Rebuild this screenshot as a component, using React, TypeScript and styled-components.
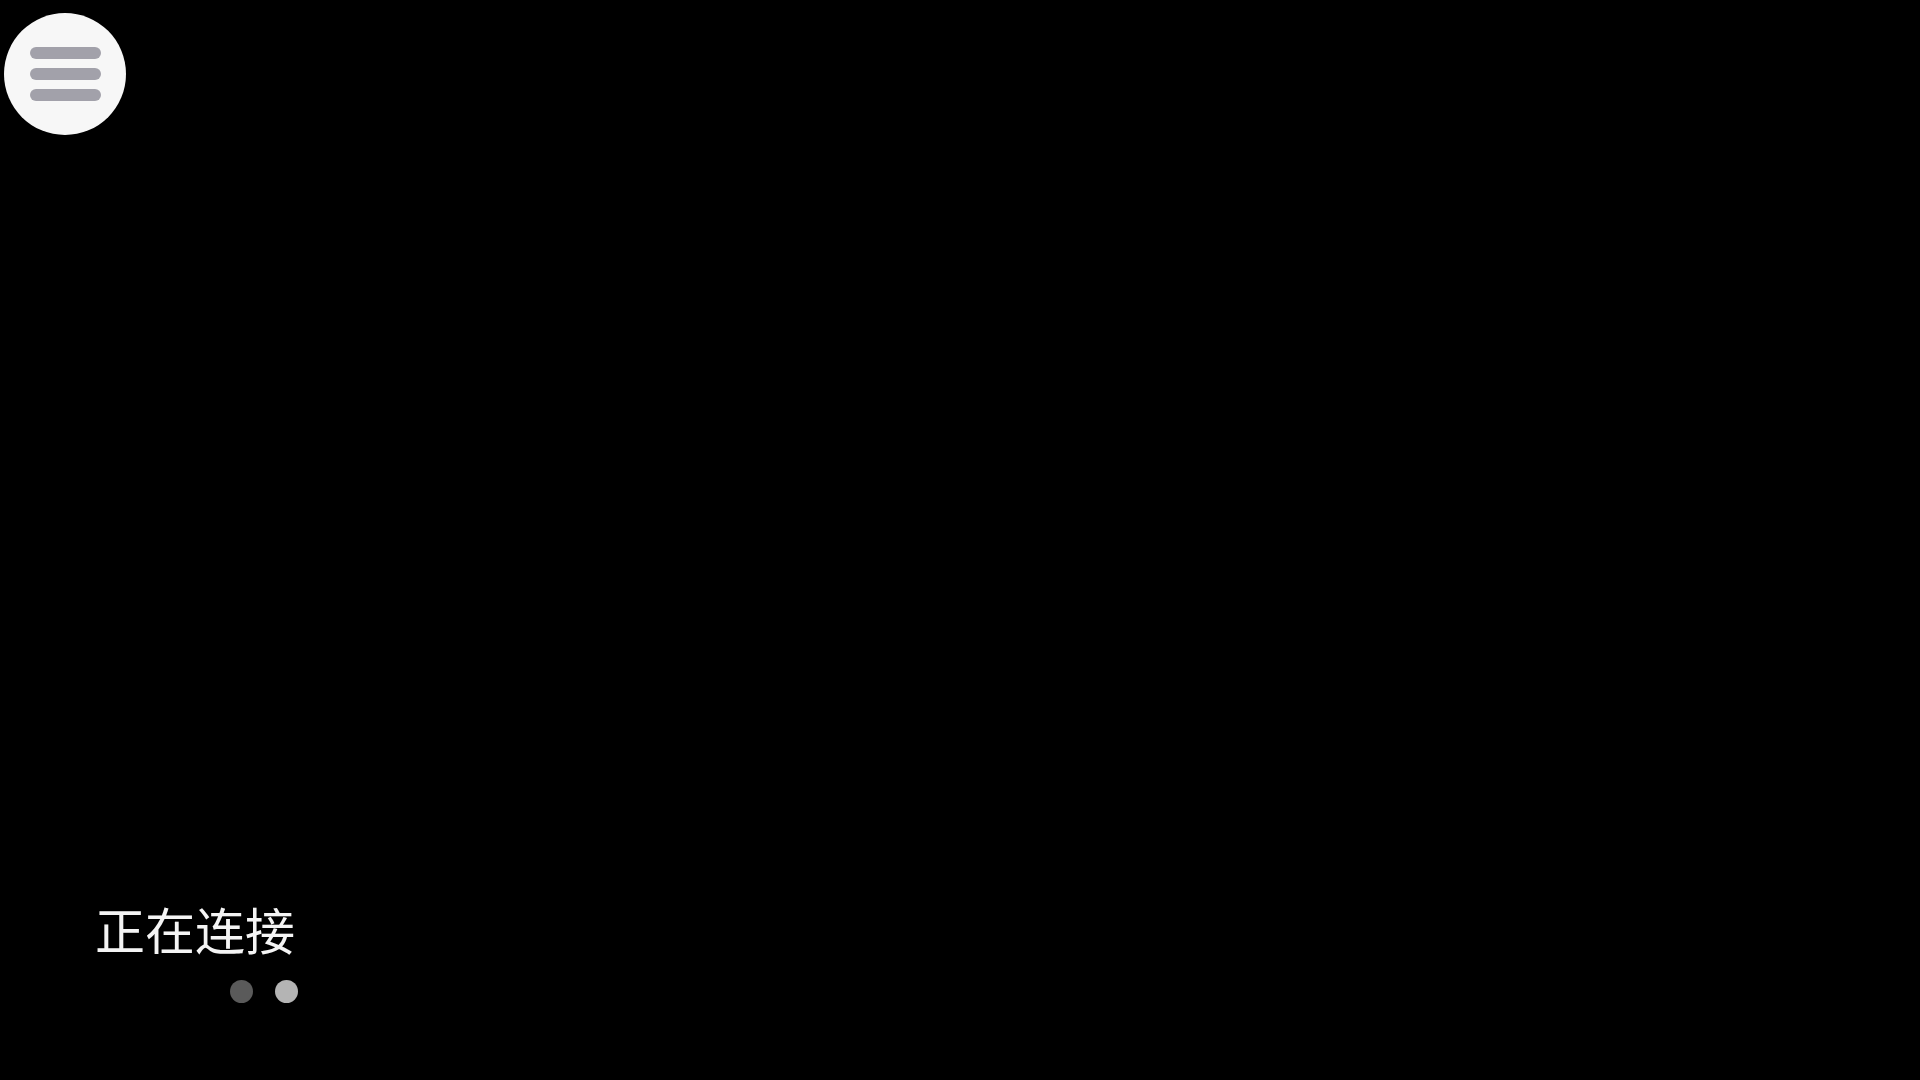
import React from "react";
import styled, { createGlobalStyle } from "styled-components";

const GlobalStyle = createGlobalStyle`
  html, body {
    margin: 0;
    padding: 0;
    background: #000;
  }
  body {
    font-family: "Noto Sans CJK SC", "Noto Sans", sans-serif;
  }
  * { box-sizing: border-box; }
`;

const Screen = styled.div`
  position: relative;
  width: 100vw;
  height: 100vh;
  background: #000;
  display: flex;
  flex-direction: column;
  justify-content: flex-end;
  padding: 0 0 77px 95px;
  overflow: hidden;
`;

const MenuButton = styled.button`
  position: absolute;
  left: 4px;
  top: 13px;
  width: 122px;
  height: 122px;
  border: none;
  border-radius: 50%;
  background: #f7f7f7;
  display: flex;
  flex-direction: column;
  align-items: center;
  justify-content: center;
  gap: 9.5px;
  padding: 0;
  cursor: pointer;
`;

const MenuBar = styled.span`
  display: block;
  width: 71px;
  height: 11.5px;
  border-radius: 6px;
  background: #a2a1aa;
`;

const Status = styled.div`
  display: flex;
  flex-direction: column;
  align-items: flex-start;
  gap: 28px;
`;

const StatusText = styled.div`
  font-family: "Noto Sans CJK SC", "Noto Sans", sans-serif;
  font-size: 50px;
  line-height: 48px;
  color: #f4f4f4;
  font-weight: 400;
`;

const Dots = styled.div`
  display: flex;
  gap: 22px;
  margin-left: 135px;
`;

const Dot = styled.span<{ $tone: string }>`
  display: block;
  width: 23px;
  height: 23px;
  border-radius: 50%;
  background: ${(p) => p.$tone};
`;

export default function App() {
  return (
    <>
      <GlobalStyle />
      <Screen>
        <MenuButton aria-label="菜单">
          <MenuBar />
          <MenuBar />
          <MenuBar />
        </MenuButton>
        <Status>
          <StatusText>正在连接</StatusText>
          <Dots>
            <Dot $tone="#5a5a5a" />
            <Dot $tone="#b4b4b4" />
          </Dots>
        </Status>
      </Screen>
    </>
  );
}
